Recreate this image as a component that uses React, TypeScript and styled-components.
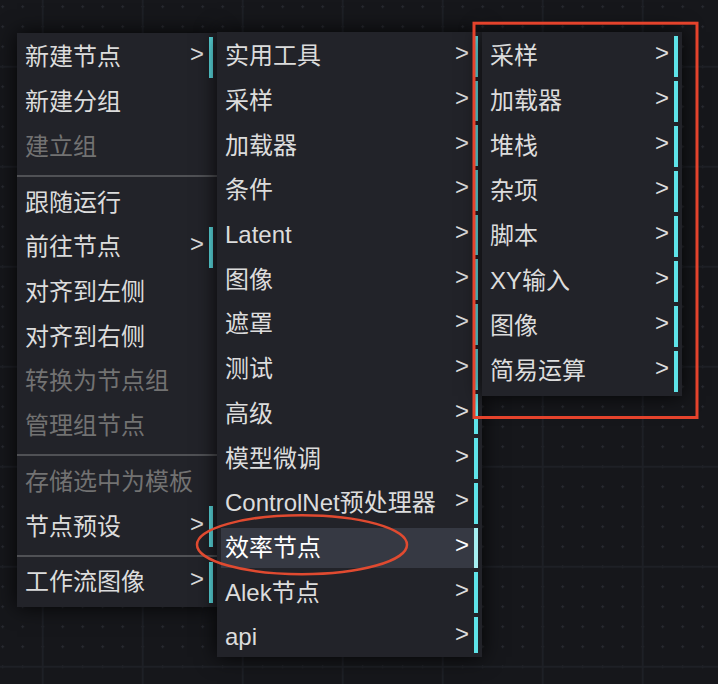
import React from 'react';
import styled, { createGlobalStyle } from 'styled-components';

const GlobalStyle = createGlobalStyle`
  html, body {
    margin: 0;
    padding: 0;
    background: #16171b;
  }
  body {
    font-family: "Liberation Sans", "Noto Sans CJK SC", sans-serif;
    overflow: hidden;
  }
  #root {
    width: 718px;
    height: 684px;
  }
`;

const Canvas = styled.div`
  position: relative;
  width: 718px;
  height: 684px;
  overflow: hidden;
  background: #16171b;
`;

const GridLayer = styled.svg`
  position: absolute;
  inset: 0;
  width: 100%;
  height: 100%;
  display: block;
`;

const AnnotationLayer = styled.svg`
  position: absolute;
  inset: 0;
  width: 100%;
  height: 100%;
  display: block;
  pointer-events: none;
  z-index: 10;
`;

const Menu = styled.div<{ $left: number; $top: number; $width: number; $z: number }>`
  position: absolute;
  left: ${(p) => p.$left}px;
  top: ${(p) => p.$top}px;
  width: ${(p) => p.$width}px;
  z-index: ${(p) => p.$z};
  box-sizing: border-box;
  padding: 4px;
  background: #222329;
  box-shadow: 0 0 20px rgba(0, 0, 0, 0.85);
`;

const List = styled.div<{ $gap: number; $maxHeight?: number }>`
  display: flex;
  flex-direction: column;
  gap: ${(p) => p.$gap}px;
  ${(p) => (p.$maxHeight ? `max-height: ${p.$maxHeight}px; overflow: hidden;` : '')}
`;

const Entry = styled.div<{ $disabled?: boolean; $sub?: boolean; $active?: boolean }>`
  flex: none;
  height: 40.7px;
  box-sizing: border-box;
  display: flex;
  align-items: center;
  justify-content: space-between;
  padding: 0 5px 0 4px;
  font-size: 24px;
  line-height: 1;
  white-space: nowrap;
  color: ${(p) => (p.$disabled ? '#727272' : p.$active ? '#ffffff' : '#dcdcdc')};
  background: ${(p) => (p.$active ? '#363943' : 'transparent')};
  border-right: ${(p) => (p.$sub ? `4px solid ${p.$active ? '#a6eff1' : '#5ee3e8'}` : 'none')};
`;

const Label = styled.span`
  display: block;
`;

const Arrow = styled.span`
  display: block;
  transform: translateY(-3px);
`;

const Separator = styled.div`
  flex: none;
  height: 2px;
  margin: 3.7px -4px 1.5px;
  background: #505155;
`;

type Item = { label: string; sub?: boolean; disabled?: boolean; active?: boolean } | 'sep';

const mainMenu: Item[] = [
  { label: '新建节点', sub: true },
  { label: '新建分组' },
  { label: '建立组', disabled: true },
  'sep',
  { label: '跟随运行' },
  { label: '前往节点', sub: true },
  { label: '对齐到左侧' },
  { label: '对齐到右侧' },
  { label: '转换为节点组', disabled: true },
  { label: '管理组节点', disabled: true },
  'sep',
  { label: '存储选中为模板', disabled: true },
  { label: '节点预设', sub: true },
  'sep',
  { label: '工作流图像', sub: true },
];

const categoryMenu: Item[] = [
  '实用工具',
  '采样',
  '加载器',
  '条件',
  'Latent',
  '图像',
  '遮罩',
  '测试',
  '高级',
  '模型微调',
  'ControlNet预处理器',
  '效率节点',
  'Alek节点',
  'api',
].map((label) => ({ label, sub: true, active: label === '效率节点' }));

const efficiencyMenu: Item[] = [
  '采样',
  '加载器',
  '堆栈',
  '杂项',
  '脚本',
  'XY输入',
  '图像',
  '简易运算',
].map((label) => ({ label, sub: true }));

function ContextMenu(props: {
  items: Item[];
  left: number;
  top: number;
  width: number;
  z: number;
  gap: number;
  maxHeight?: number;
}) {
  const { items, left, top, width, z, gap, maxHeight } = props;
  return (
    <Menu $left={left} $top={top} $width={width} $z={z}>
      <List $gap={gap} $maxHeight={maxHeight}>
        {items.map((item, i) =>
          item === 'sep' ? (
            <Separator key={i} />
          ) : (
            <Entry key={i} $disabled={item.disabled} $sub={item.sub} $active={item.active}>
              <Label>{item.label}</Label>
              {item.sub && <Arrow>&gt;</Arrow>}
            </Entry>
          )
        )}
      </List>
    </Menu>
  );
}

function Grid() {
  const vLines = [42.7, 142.7, 242.7, 342.7, 442.7, 542.7, 642.7];
  const hLines = [66.7, 166.7, 266.7, 366.7, 466.7, 566.7, 666.7];
  return (
    <GridLayer viewBox="0 0 718 684">
      <defs>
        <pattern id="dots" x="0" y="0" width="20" height="20" patternUnits="userSpaceOnUse">
          <path d="M1.2 6.7H4.2M2.7 5.2V8.2" stroke="#272930" strokeWidth="1" />
        </pattern>
      </defs>
      <rect x="0" y="0" width="718" height="684" fill="#16171b" />
      <rect x="0" y="0" width="718" height="684" fill="url(#dots)" />
      {vLines.map((x) => (
        <line key={`v${x}`} x1={x} y1={0} x2={x} y2={684} stroke="#1e2026" strokeWidth="2" />
      ))}
      {hLines.map((y) => (
        <line key={`h${y}`} x1={0} y1={y} x2={718} y2={y} stroke="#1e2026" strokeWidth="2" />
      ))}
    </GridLayer>
  );
}

function Annotations() {
  return (
    <AnnotationLayer viewBox="0 0 718 684">
      <rect x="474" y="23.2" width="223" height="394.3" fill="none" stroke="#e5432c" strokeWidth="3" />
      <ellipse cx="302" cy="544.7" rx="105" ry="29.5" fill="none" stroke="#e04a30" strokeWidth="2.5" />
    </AnnotationLayer>
  );
}

export default function App() {
  return (
    <Canvas>
      <GlobalStyle />
      <Grid />
      <ContextMenu items={mainMenu} left={17} top={33} width={200} z={1} gap={4} />
      <ContextMenu items={categoryMenu} left={217} top={32} width={265} z={2} gap={4} maxHeight={617} />
      <ContextMenu items={efficiencyMenu} left={482} top={32} width={200} z={3} gap={4.3} />
      <Annotations />
    </Canvas>
  );
}
